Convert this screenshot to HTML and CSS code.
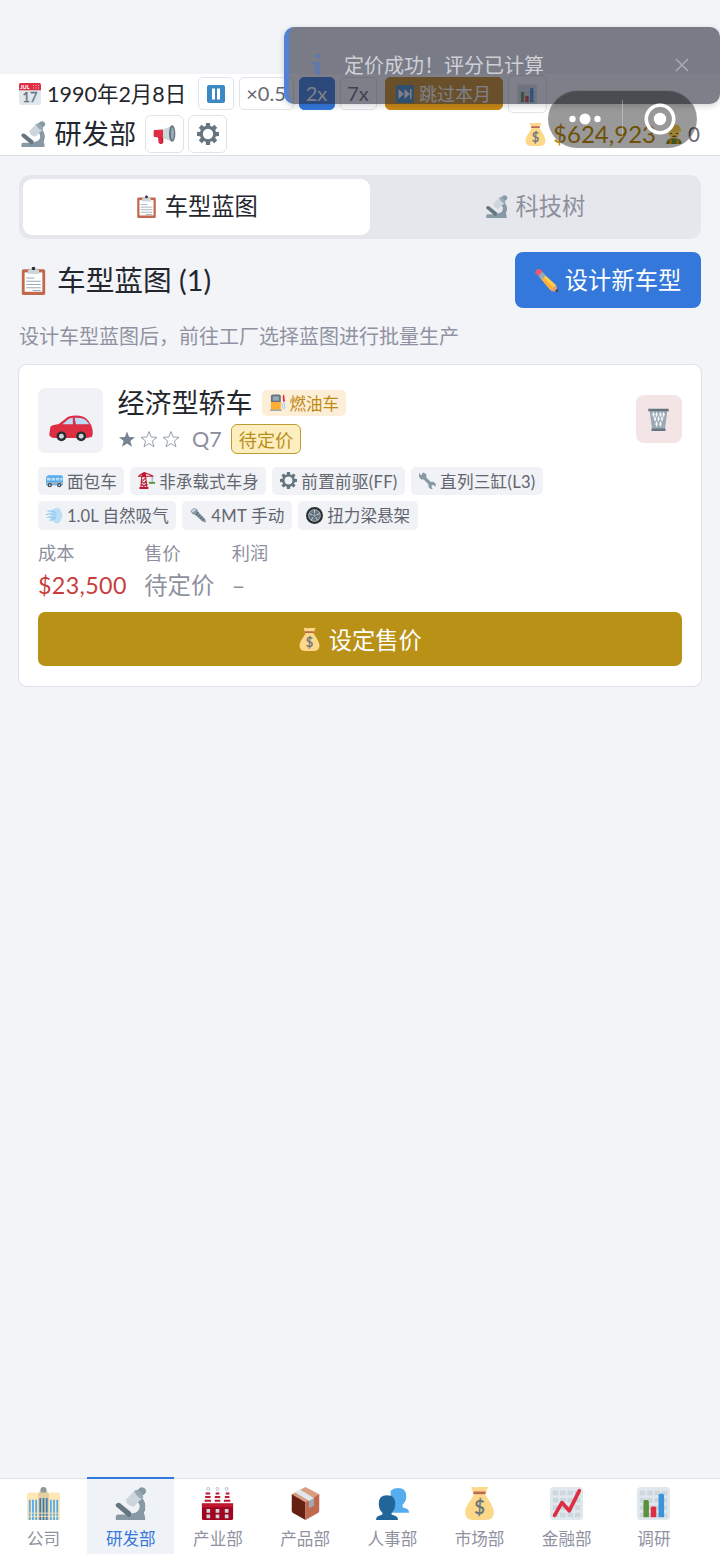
FILE: index.html
```html
<!DOCTYPE html>
<html lang="zh-CN">
<head>
<meta charset="utf-8">
<title>研发部</title>
<link rel="stylesheet" href="styles.css">
</head>
<body>
<svg class="sprite" aria-hidden="true">
  <symbol id="scope" viewBox="0 0 36 36"><path fill="#66757f" d="M22 31q7-2 7-9-1-5-5-7l3-5q7 4 7 12 0 6-5 10h-6z"/><path fill="#8899a6" d="M2 32q0-2 3-2h22l-1-3h5q3 2 3 9H2z"/><path fill="#8899a6" d="M19 29q10-1 9-10 0-4-4-5l3-5q7 5 7 11 0 8-6 12h-9z"/><path fill="#66757f" d="M2 19q2-3 5-1l11 9q2 2 0 5l-2 1L2 21z"/><path fill="#8899a6" d="m24 5 4-4q3-2 6 1 2 3 0 5l-4 3z"/><path fill="#ccd6dd" d="M13 14 22 4q7 1 9 8l-9 9q-2 1-5-1-4-2-4-6z"/><path fill="#9aaab4" d="m22 4 3-1q6 3 7 8l-1 2q-6-1-9-9z"/></symbol>
  <symbol id="pause" viewBox="0 0 36 36"><rect width="36" height="36" rx="4" fill="#3b88c3"/><path fill="#fff" d="M10 7h6v22h-6zm10 0h6v22h-6z"/></symbol>
  <symbol id="skip" viewBox="0 0 36 36"><rect width="36" height="36" rx="4" fill="#3b88c3"/><path fill="#fff" d="M5 8l11 10L5 28zm12 0 11 10-11 10zM28 8h3v20h-3z"/></symbol>
  <symbol id="mega" viewBox="0 0 36 36"><path fill="#be1931" d="M8 21h8v10q-4 4-7 0z"/><path fill="#dd2e44" d="M1 13q0-2 2-2l13-1v14L3 22q-2 0-2-2z"/><path fill="#ccd6dd" d="M16 10 30 4v25l-14-5z"/><ellipse cx="30" cy="16.5" rx="5" ry="13" fill="#66757f"/><ellipse cx="30.5" cy="16.5" rx="2.5" ry="10" fill="#99aab5"/><path fill="#dd2e44" d="M9 24h5v7H9z"/></symbol>
  <symbol id="gear" viewBox="0 0 36 36"><g fill="#66757f"><path id="tooth" d="m14.700 0-.7 9h8l-.7-9zM14 27l.7 9h6.600l.7-9z"/><use href="#tooth" transform="rotate(45 18 18)"/><use href="#tooth" transform="rotate(90 18 18)"/><use href="#tooth" transform="rotate(135 18 18)"/></g><circle cx="18" cy="18" r="11" fill="none" stroke="#66757f" stroke-width="5"/></symbol>
  <symbol id="bars" viewBox="0 0 36 36"><rect width="36" height="36" rx="4" fill="#e1e8ed"/><path fill="#ccd6dd" d="M3 4h6v5H3zm8 0h6v5h-6zm8 0h6v5h-6zm8 0h6v5h-6zM3 12h6v5H3zm8 0h6v5h-6zm8 0h6v5h-6zm8 0h6v5h-6zM3 20h6v5H3zm8 0h6v5h-6zm8 0h6v5h-6zm8 0h6v5h-6zM3 28h6v5H3zm8 0h6v5h-6zm8 0h6v5h-6zm8 0h6v5h-6z"/><path fill="#5c913b" d="M7 16q0-2 3-2t3 2v17H7z"/><path fill="#dd2e44" d="M15 23q0-2 3-2t3 2v10h-6z"/><path fill="#3b94d9" d="M23.500 9q0-2 3-2t3 2v24h-6z"/></symbol>
  <symbol id="trend" viewBox="0 0 36 36"><rect width="36" height="36" rx="4" fill="#e1e8ed"/><path fill="#ccd6dd" d="M3 4h6v5H3zm8 0h6v5h-6zm8 0h6v5h-6zm8 0h6v5h-6zM3 12h6v5H3zm8 0h6v5h-6zm8 0h6v5h-6zm8 0h6v5h-6zM3 20h6v5H3zm8 0h6v5h-6zm8 0h6v5h-6zm8 0h6v5h-6zM3 28h6v5H3zm8 0h6v5h-6zm8 0h6v5h-6zm8 0h6v5h-6z"/><path fill="none" stroke="#dd2e44" stroke-width="4" stroke-linecap="round" stroke-linejoin="round" d="m5 31 8-14 8 9L32 4"/></symbol>
  <symbol id="bag" viewBox="0 0 36 36"><path fill="#fdd888" d="M12 8h12q4 6 7 11 4 8 2 12-2 5-8 5H11q-6 0-8-5-2-5 2-12 4-5 7-11z"/><path fill="#fdd888" d="M11 6 9 1q0-2 3-1 3 1 6 0 3-1 6 0 4-1 3 1l-2 5z"/><rect x="11" y="5" width="14" height="3" rx="1.500" fill="#bf6952"/><text class="coin" x="18" y="29">$</text></symbol>
  <symbol id="worker" viewBox="0 0 36 36"><path fill="#5c913b" d="M4 36q0-11 14-11t14 11z"/><path fill="#f4900c" d="M9 27h5v9H9zm13 0h5v9h-5z"/><circle cx="18" cy="16" r="10" fill="#ffdc5d"/><path fill="#ffcc4d" d="M5 13q2-13 13-13t13 13z"/><path d="M11 17h3m8 0h3m-10 5h7" stroke="#662113" stroke-width="2"/></symbol>
  <symbol id="clip" viewBox="0 0 36 36"><rect x="3.500" y="4" width="29" height="32" rx="2" fill="#c1694f"/><path fill="#fff" d="M7 8h22v24H7z"/><path fill="#ccd6dd" d="M11 10V7q0-3 4-3 1-3 3-3t3 3q4 0 4 3v3z"/><circle cx="18" cy="3" r="2.200" fill="#292f33"/><path stroke="#99aab5" stroke-width="1.300" d="M9 15h10M9 19h18M9 23h18M9 27h18M17 30.500h10"/></symbol>
  <symbol id="pencil" viewBox="0 0 36 36"><path fill="#d99e82" d="m26 35 9 1-1-9-4-3-7 7z"/><path fill="#292f33" d="m31 35 5 1-1-5z"/><path fill="#ffcc4d" d="M9 15 15 9l18 16q-1 2-4 3l-2 4-3 1z"/><path fill="#ffac33" d="m9 15 3-3 16 17-1 3-3 1z"/><path fill="#99aab5" d="m5 10 6-6 6 6-7 7z"/><path fill="#ea596e" d="M1 7q-2-3 2-6 3-3 6 0l3 3-7 7z"/></symbol>
  <symbol id="car" viewBox="0 0 36 36"><path fill="#dd2e44" d="M1 18q0-2 3-2.500l4-.8 6-4.700q2-2.200 8-2.200 7 0 10 4 3 3.500 3.500 7 .8 5-.5 6.500l-4 .9H4q-4-.4-3.700-3.200z"/><path fill="#bbddf5" d="m11 15 4.500-4q1.500-1.300 4-1.300V15zm10-5.300q6-.3 9 1.800l3 3.500H22z"/><g fill="#292f33"><circle cx="10.200" cy="24.800" r="4"/><circle cx="26.300" cy="24.800" r="4"/></g><g fill="#ccd6dd"><circle cx="10.200" cy="24.800" r="2"/><circle cx="26.300" cy="24.800" r="2"/></g></symbol>
  <symbol id="fuel" viewBox="0 0 36 36"><path fill="none" stroke="#8ccaf7" stroke-width="2" d="M25 20q4 0 4 5v4q1 4 4 1 2-2 0-7l-3-9"/><path fill="#dd2e44" d="m29 4 3-3 2 15h-4z"/><path fill="#ffac33" d="M4 16h21v18H4z"/><path fill="#66757f" d="M4 5q0-4 4-4h13q4 0 4 4v12H4z"/><path fill="#99aab5" d="M8 5h13v9H8z"/><path fill="#99aab5" d="M2 33h25v3H2z"/></symbol>
  <symbol id="trash" viewBox="0 0 36 36"><path fill="#99aab5" d="M4 3h28l-4 31H8z"/><g fill="#f3f5f7"><path d="m10 5 2 5-2 5-2-5zm5 0 2 5-2 5-2-5zm6 0 2 5-2 5-2-5zm5 0 2 5-2 5-2-5z"/><path d="m12.500 12 2 5-2 5-2-5zm5.500 0 2 5-2 5-2-5zm5.500 0 2 5-2 5-2-5zM15 20l2 5-2 5-2-5zm6 0 2 5-2 5-2-5z"/></g><path fill="#66757f" d="M2 1h32v4H2zm5 31h22v4H7z"/></symbol>
  <symbol id="van" viewBox="0 0 36 36"><path fill="#55acee" d="M0 13Q1 7 5 7h27q3 0 4 4v15q0 2-2 2H0z"/><path fill="#bbddf5" d="M2 12h8v6H2zm10 0h7v6h-7zm9 0h7v6h-7zm9 0h5v6h-5z"/><path fill="#a7b8c2" d="M0 22h36v4H0z"/><g fill="#394650"><circle cx="8" cy="28" r="4.500"/><circle cx="28" cy="28" r="4.500"/></g><g fill="#ccd6dd"><circle cx="8" cy="28" r="2"/><circle cx="28" cy="28" r="2"/></g></symbol>
  <symbol id="crane" viewBox="0 0 36 36"><g fill="none" stroke="#be1931" stroke-width="2.200"><path d="M8 8 6 33M16 8l3 25M7 15l11 6-11 6 11 6M16 13l-9 8 12 6-13 6M0 9h33M2 8 13 1l18 7"/></g><path fill="#be1931" d="M8 2h9v9H8zM3 32h19v4H3z"/><path d="M30 9v12" stroke="#66757f" stroke-width="1.500"/><path fill="#5c913b" d="M23 21h13v4H23z"/></symbol>
  <symbol id="wrench" viewBox="0 0 36 36"><path fill="#8899a6" d="M1 2q1 5 5 4l2-5q7 1 8 7l-1 3 10 10q7-2 10 4 1 3 0 6l-5-4-4 3 3 6q-7 0-9-6v-4L10 16Q2 17 0 9q-1-4 1-7z"/></symbol>
  <symbol id="wind" viewBox="0 0 36 36"><path fill="#bbddf5" d="M13 8q3-7 10-6 8 0 9 8 5 7 1 14-2 10-10 11-7-1-10-7-6-2-4-8-1-8 4-12z"/><path fill="none" stroke="#8ccaf7" stroke-width="2.400" stroke-linecap="round" d="M4 9q10-3 17 4M1 16q9-4 20 2M3 22q8-2 17 1M8 28q6 0 12-4"/></symbol>
  <symbol id="bolt" viewBox="0 0 36 36"><path fill="#8899a6" d="m1 8 7-6 7 2 2 6 16 17 1 6-6-1L11 17l-6-2z"/><path fill="#ccd6dd" d="m3 8 6-5 4 3-7 6z"/><path stroke="#5b6872" stroke-width="2.500" d="m13 17 5-6M17 21l5-5M21 25l5-5M25 29l5-5"/></symbol>
  <symbol id="wheel" viewBox="0 0 36 36"><circle cx="18" cy="18" r="18" fill="#292f33"/><circle cx="18" cy="18" r="12.500" fill="#66757f" stroke="#ccd6dd" stroke-width="1.400"/><path stroke="#ccd6dd" stroke-width="2" fill="none" d="M18 18V6m0 12 11-4m-11 4 7 10m-7-10-7 10m7-10L7 14"/><circle cx="18" cy="18" r="4" fill="#99aab5" stroke="#292f33"/></symbol>
  <symbol id="office" viewBox="0 0 36 36"><path fill="#ffe8b6" d="M0 9q0-3 3-3h8q2 0 2 3v27H0zm23 0q0-3 2-3h8q3 0 3 3v27H23z"/><path fill="#e8cfa2" d="M12 8q0-2 2-3 0-5 4-5t4 5q2 1 2 3v28H12z"/><path fill="#8899a6" d="M15 3q0-3 3-3t3 3v3h-6z"/><path stroke="#55acee" stroke-width="2" d="M3 14v22m3.500-22v22m3.500-22v22m16-22v22m3.500-22v22m3.500-22v22"/><path stroke="#3b7cae" stroke-width="2" d="M14.500 12v24m3.500-24v24m3.500-24v24"/><path stroke="#f5e3c3" stroke-width="1" d="M0 28.500h36M0 32h36"/></symbol>
  <symbol id="factory" viewBox="0 0 36 36"><path fill="#f5f8fa" d="M5 4h4l2 15H4zm11 0h4l1 15h-6zm11 0h4l1 15h-7z"/><path stroke="#be1931" stroke-width="2.200" d="M5 7h5M4.500 11h6M4 15h7M16 7h4M15 11h6M15 15h6M27 7h4M26 11h5M25 15h7"/><g fill="#f5f8fa" stroke="#99aab5" stroke-width=".7"><circle cx="8" cy="2" r="1.600"/><circle cx="18" cy="2" r="1.600"/><circle cx="28" cy="2" r="1.600"/></g><path fill="#a0041e" d="M1 18h34v16q0 2-2 2H3q-2 0-2-2z"/><path fill="#be1931" d="M1 18h34v4H1z"/><path fill="#ccd6dd" d="M6 24h4v4H6zm10 0h4v4h-4zm10 0h4v4h-4zM6 30h4v4H6zm10 0h4v4h-4zm10 0h4v4h-4z"/></symbol>
  <symbol id="box" viewBox="0 0 36 36"><path fill="#d99e82" d="M18 0 33 8v2L18 18 3 9V8z"/><path fill="#662113" d="m3 8 15 9v19L4 28q-1-1-1-2z"/><path fill="#c1694f" d="m33 8-15 9v19l14-8q1-1 1-2z"/><path fill="#ccd6dd" d="m7 6 5-3 15 9v8l-5 3v-8z"/><path fill="#99aab5" d="m22 15 5-3v8l-5 3z"/><path fill="#e1e8ed" d="m7 6 5-3 15 9-5 3z"/></symbol>
  <symbol id="people" viewBox="0 0 36 36"><path fill="#55acee" d="M24 1q9 0 9 9 0 6-4 9v3l5 2q2 1 2 4H16V4q3-3 8-3z"/><path fill="#269" d="M12 9q9 0 9 9 0 7-4 10v2l5 2q2 1 2 4H0q0-3 2-4l5-2v-2q-4-3-4-10Q3 9 12 9z"/></symbol>
</svg>

<header class="topbar">
  <div class="time-row">
    <svg class="icon i22" viewBox="0 0 36 36"><path fill="#e1e8ed" d="M0 9h36v23a4 4 0 0 1-4 4H4a4 4 0 0 1-4-4z"/><path fill="#dd2e44" d="M0 12V3a3 3 0 0 1 3-3h30a3 3 0 0 1 3 3v9z"/><g fill="#f4abba"><circle cx="24" cy="4" r="1"/><circle cx="28" cy="4" r="1"/><circle cx="32" cy="4" r="1"/><circle cx="24" cy="8" r="1"/><circle cx="28" cy="8" r="1"/><circle cx="32" cy="8" r="1"/></g><text class="cal-month" x="2" y="10">JUL</text><text class="cal-day" x="18" y="31">17</text></svg>
    <span class="date">1990年2月8日</span>
    <div class="speeds">
      <button class="ctl ctl-pause"><svg class="icon i18"><use href="#pause"/></svg></button>
      <button class="ctl ctl-half">×0.5</button>
      <button class="ctl ctl-on">2x</button>
      <button class="ctl">7x</button>
      <button class="ctl ctl-skip"><svg class="icon i18"><use href="#skip"/></svg>跳过本月</button>
      <button class="ctl ctl-chart"><svg class="icon i20"><use href="#bars"/></svg></button>
    </div>
  </div>
  <div class="dept-row">
    <svg class="icon i26"><use href="#scope"/></svg>
    <h1 class="dept">研发部</h1>
    <button class="square"><svg class="icon i24"><use href="#mega"/></svg></button>
    <button class="square"><svg class="icon i22"><use href="#gear"/></svg></button>
    <div class="funds">
      <svg class="icon i24"><use href="#bag"/></svg><span class="cash">$624,923</span>
      <svg class="icon i20"><use href="#worker"/></svg><span class="staff">0</span>
    </div>
  </div>
</header>

<main class="content">
  <nav class="tabs">
    <button class="tab tab-on"><svg class="icon i23"><use href="#clip"/></svg>车型蓝图</button>
    <button class="tab"><svg class="icon i23"><use href="#scope"/></svg>科技树</button>
  </nav>
  <div class="section-head">
    <svg class="icon i29"><use href="#clip"/></svg>
    <h2 class="section-title">车型蓝图 (1)</h2>
    <button class="primary"><svg class="icon i24"><use href="#pencil"/></svg>设计新车型</button>
  </div>
  <p class="hint">设计车型蓝图后，前往工厂选择蓝图进行批量生产</p>

  <article class="card">
    <div class="card-head">
      <div class="thumb"><svg class="icon i44"><use href="#car"/></svg></div>
      <div class="summary">
        <div class="name-line"><h3 class="name">经济型轿车</h3><span class="fuel"><svg class="icon i17"><use href="#fuel"/></svg>燃油车</span></div>
        <div class="rate-line">
          <svg class="stars" viewBox="0 0 62 20"><path d="m9 2.500 2.100 5.500 5.900.3-4.600 3.700 1.600 5.700L9 14.500l-5 3.200L5.600 12 1 8.300 6.900 8z"/><path class="hollow" d="m31 2.500 2.100 5.500 5.900.3-4.600 3.700 1.600 5.700-5-3.200-5 3.200 1.600-5.700L23 8.300l5.900-.3z"/><path class="hollow" d="m53 2.500 2.100 5.500 5.900.3-4.600 3.700 1.600 5.700-5-3.200-5 3.200 1.600-5.700L45 8.300l5.900-.3z"/></svg>
          <span class="quality">Q7</span><span class="pending">待定价</span>
        </div>
      </div>
      <button class="remove"><svg class="icon i24"><use href="#trash"/></svg></button>
    </div>
    <div class="chips">
      <span class="chip"><svg class="icon i17"><use href="#van"/></svg>面包车</span>
      <span class="chip"><svg class="icon i17"><use href="#crane"/></svg>非承载式车身</span>
      <span class="chip chip-wide"><svg class="icon i17"><use href="#gear"/></svg>前置前驱(FF)</span>
      <span class="chip chip-wide"><svg class="icon i17"><use href="#wrench"/></svg>直列三缸(L3)</span>
      <span class="chip"><svg class="icon i17"><use href="#wind"/></svg>1.0L 自然吸气</span>
      <span class="chip chip-wide"><svg class="icon i17"><use href="#bolt"/></svg>4MT 手动</span>
      <span class="chip"><svg class="icon i17"><use href="#wheel"/></svg>扭力梁悬架</span>
    </div>
    <dl class="figures">
      <div class="figure"><dt>成本</dt><dd class="cost">$23,500</dd></div>
      <div class="figure"><dt>售价</dt><dd>待定价</dd></div>
      <div class="figure"><dt>利润</dt><dd>–</dd></div>
    </dl>
    <button class="set-price"><svg class="icon i23"><use href="#bag"/></svg>设定售价</button>
  </article>
</main>

<nav class="bottom-nav">
  <a class="dest"><svg class="icon i33"><use href="#office"/></svg>公司</a>
  <a class="dest dest-on"><svg class="icon i33"><use href="#scope"/></svg>研发部</a>
  <a class="dest"><svg class="icon i33"><use href="#factory"/></svg>产业部</a>
  <a class="dest"><svg class="icon i33"><use href="#box"/></svg>产品部</a>
  <a class="dest"><svg class="icon i33"><use href="#people"/></svg>人事部</a>
  <a class="dest"><svg class="icon i33"><use href="#bag"/></svg>市场部</a>
  <a class="dest"><svg class="icon i33"><use href="#trend"/></svg>金融部</a>
  <a class="dest"><svg class="icon i33"><use href="#bars"/></svg>调研</a>
</nav>

<div class="toast">
  <svg class="info" viewBox="0 0 20 24"><path d="M8 1h5v4H8zM5 9h8v13H8V12H5z"/></svg>
  <span class="message">定价成功！评分已计算</span>
  <svg class="close" viewBox="0 0 14 14"><path d="m1 1 12 12M13 1 1 13"/></svg>
</div>
<div class="capsule">
  <svg class="dots" viewBox="0 0 32 12"><circle cx="3.500" cy="6" r="3.200"/><circle cx="16" cy="6" r="5.500"/><circle cx="28.500" cy="6" r="3.200"/></svg>
  <span class="divider"></span>
  <svg class="target" viewBox="0 0 32 32"><circle class="ring" cx="16" cy="16" r="13.700"/><circle cx="16" cy="16" r="6.200"/></svg>
</div>
</body>
</html>
```
FILE: styles.css
```css
* { box-sizing: border-box; }
body, h1, h2, h3, p, dl, dd { margin: 0; font-weight: inherit; }
body {
  height: 1554px;
  padding-top: 74px;
  display: flex;
  flex-direction: column;
  overflow: hidden;
  background: #f2f4f8;
  color: #24262d;
  font-family: Lato, "Noto Sans CJK SC", sans-serif;
  font-weight: 400;
}
button { margin: 0; padding: 0; border: 0; background: none; color: inherit; font: inherit; }
button, .chip, .fuel, .pending { display: flex; align-items: center; justify-content: center; white-space: nowrap; }
.sprite { position: absolute; width: 0; height: 0; }
.icon { display: block; flex: none; overflow: visible; }
.i17 { width: 17px; height: 17px; }
.i18 { width: 18px; height: 18px; }
.i20 { width: 20px; height: 20px; }
.i22 { width: 22px; height: 22px; }
.i23 { width: 23px; height: 23px; }
.i24 { width: 23px; height: 23px; }
.i26 { width: 26px; height: 26px; }
.i29 { width: 29px; height: 29px; }
.i33 { width: 33px; height: 33px; }
.i44 { width: 44px; height: 44px; }
.cal-month { font: 900 9px Lato, sans-serif; fill: #fff; }
.cal-day { font: 400 21px Lato, sans-serif; fill: #66757f; stroke: #66757f; stroke-width: .6; text-anchor: middle; }
.coin { font: 400 20px Lato, sans-serif; fill: #67757f; stroke: #67757f; stroke-width: .5; text-anchor: middle; }

.topbar { height: 82px; flex: none; padding: 3px 20px 0 19px; background: #fff; border-bottom: 1.500px solid #dee0e8; }
.time-row { height: 33px; display: flex; align-items: center; }
.date { width: 156.500px; flex: none; padding-left: 6px; font-size: 21.500px; line-height: 30px; white-space: nowrap; }
.speeds { display: flex; gap: 5px; align-items: center; }
.ctl { height: 32.500px; width: 37px; flex: none; padding-bottom: 2px; border: 1.500px solid #e1e3ea; border-radius: 5px; font-size: 20px; color: #666873; background: #fff; }
.ctl .icon { margin-top: 2px; }
.ctl-pause { width: 36px; }
.ctl-half { width: 55px; }
.ctl-on { width: 36px; background: #3478dc; border-color: #3478dc; color: #fff; }
.ctl-skip { width: 118px; margin-left: 3px; gap: 5px; background: #ca8a14; border-color: #ca8a14; color: #fff; font-size: 18px; }
.ctl-chart { width: 39px; height: 38px; }
.dept-row { height: 38px; margin-top: 5px; display: flex; align-items: center; }
.dept-row > .icon { margin-left: 1px; }
.dept { padding-left: 8.500px; width: 98.500px; font-size: 27.200px; line-height: 36px; white-space: nowrap; }
.square { width: 39px; height: 38px; margin-right: 4.500px; border: 1.500px solid #e1e3ea; border-radius: 6px; }
.funds { margin-left: auto; display: flex; align-items: center; }
.cash { width: 117px; padding-left: 6px; font-size: 24px; line-height: 30px; color: #b8860b; }
.staff { padding-left: 4px; font-size: 20.500px; color: #666873; }

.content { flex: 1; padding: 19px 19px 0; }
.tabs { height: 63.500px; padding: 4px; display: flex; gap: 4px; border-radius: 11px; background: #e6e7ec; }
.tab { flex: 1 1 auto; padding-bottom: 3px; gap: 7px; border-radius: 9px; font-size: 23.300px; color: #8e909e; }
.tab .icon, .primary .icon { margin-top: 2px; }
.tab-on { background: #fff; color: #24262d; }
.section-head { height: 56px; margin-top: 13.500px; display: flex; align-items: center; }
.section-title { padding-left: 9px; padding-bottom: 1px; font-size: 28.700px; line-height: 40px; }
.primary { margin-left: auto; width: 186px; height: 56px; padding-bottom: 2px; gap: 7px; border-radius: 8px; background: #3478dc; color: #fff; font-size: 23.300px; }
.hint { margin-top: 14px; font-size: 20px; line-height: 28px; color: #9092a1; white-space: nowrap; }

.card { height: 323px; margin: 14px -1px 0; padding: 20px 19.500px 0 19px; border: 1.500px solid #dfe1eb; border-radius: 9px; background: #fff; }
.card-head { height: 70px; display: flex; align-items: center; }
.thumb { width: 65px; height: 65px; padding-top: 15px; display: flex; align-items: center; justify-content: center; border-radius: 7px; background: #f1f2f6; }
.summary { padding-left: 14.500px; }
.name-line { height: 36px; display: flex; align-items: center; }
.name { font-size: 27px; line-height: 34px; }
.fuel { height: 26px; margin-left: 9px; padding: 0 7px; gap: 4px; border-radius: 5px; background: #fdeed8; color: #bd8a12; font-size: 16.500px; }
.rate-line { height: 33px; margin-top: 2px; display: flex; align-items: center; color: #8b8e9c; }
.stars { width: 62px; height: 20px; fill: #778391; }
.stars .hollow { fill: none; stroke: #7f8995; stroke-width: .8; }
.quality { width: 39px; margin-left: 12.500px; font-size: 21.500px; }
.pending { height: 30px; width: 70px; padding-bottom: 1px; border: 1.500px solid #bd9d33; border-radius: 6px; background: #fdeec0; color: #b8901b; font-size: 18.200px; }
.remove { width: 45.500px; height: 48px; margin-left: auto; margin-top: -2px; border-radius: 8px; background: #f3e5e6; }
.chips { margin-top: 11.500px; padding-right: 20px; display: flex; flex-wrap: wrap; gap: 6px; }
.chip { height: 28.500px; padding: 0 7.500px; gap: 4.500px; border-radius: 5px; background: #f0f2f6; color: #62656f; font-size: 16.600px; }
.chip-wide { letter-spacing: .27px; }
.figures { margin-top: 10px; display: flex; gap: 17.500px; color: #8e909e; }
.figures dt { font-size: 18.200px; line-height: 27px; }
.figures dd { font-size: 23.300px; line-height: 36px; white-space: nowrap; }
.figures .cost { color: #c73e3e; letter-spacing: .35px; }
.set-price { width: 100%; height: 54px; margin-top: 9.500px; gap: 8px; border-radius: 7px; background: #b99116; color: #fff; font-size: 23.300px; }

.bottom-nav { height: 76.500px; flex: none; display: flex; background: #fff; border-top: 1.500px solid #e0e2e9; }
.dest { width: 87.200px; height: 77px; flex: none; margin-top: -1.500px; padding-top: 9.500px; display: flex; flex-direction: column; align-items: center; gap: 7.500px; color: #9092a1; font-size: 16.600px; line-height: 25px; }
.dest-on { padding-top: 7.500px; border-top: 2px solid #3478dc; background: #eff2f6; color: #3478dc; }

.toast { position: absolute; left: 284px; top: 27px; width: 436px; height: 77px; padding: 0 0 2px 18px; display: flex; align-items: center; border-left: 5px solid #5281d6; border-radius: 10px; background: rgba(40, 42, 58, .6); box-shadow: 0 2px 6px rgba(20, 24, 40, .18); }
.info { width: 20px; height: 24px; fill: #4b78cc; opacity: .5; }
.message { margin-left: 17px; font-size: 20px; line-height: 28px; color: #cfd0d6; white-space: nowrap; }
.close { width: 14px; height: 14px; margin-left: auto; margin-right: 31px; fill: none; stroke: #aaabb4; stroke-width: 1.500; }
.capsule { position: absolute; left: 548px; top: 90px; width: 149px; height: 58px; padding: 0 20px; display: flex; align-items: center; border: 1px solid rgba(160, 160, 160, .5); border-radius: 29px; background: rgba(0, 0, 0, .4); }
.dots { width: 32px; height: 12px; flex: none; fill: #fff; }
.divider { width: 1px; height: 38px; flex: none; margin: 0 21px; background: rgba(255, 255, 255, .3); }
.target { width: 32px; height: 32px; flex: none; fill: #fff; }
.ring { fill: none; stroke: #fff; stroke-width: 3.600; }
```
